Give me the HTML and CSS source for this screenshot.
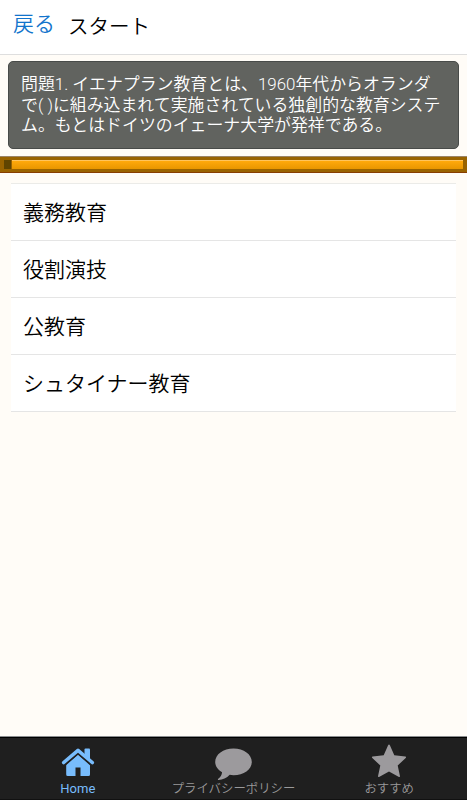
FILE: index.html
```
<!DOCTYPE html>
<html lang="ja">
<head>
    <meta charset="UTF-8">
    <meta name="viewport" content="width=device-width, initial-scale=1.0">
    <title>スタート</title>
    <link rel="stylesheet" href="styles.css">
</head>
<body>
    <header class="header">
        <a class="back" href="#">戻る</a>
        <h1 class="title">スタート</h1>
    </header>
    <main class="content">
        <p class="question">問題1. イエナプラン教育とは、1960年代からオランダ<br>で( )に組み込まれて実施されている独創的な教育システ<br>ム。もとはドイツのイェーナ大学が発祥である。</p>
        <div class="timer">
            <div class="timer-used"></div>
            <div class="timer-left"></div>
        </div>
        <ul class="answers">
            <li>義務教育</li>
            <li>役割演技</li>
            <li>公教育</li>
            <li>シュタイナー教育</li>
        </ul>
    </main>
    <nav class="tabs">
        <a class="tab active" href="#">
            <svg width="40" height="36" viewBox="0 0 40 36">
                <path d="M8.200 20.500 20 10.500l12 10V30.500q0 1.500-1.500 1.500h-8V23.500h-5v8.500H9.700q-1.500 0-1.500-1.500z"/>
                <path d="M5.700 19.600 20 7.300l14.300 12.300" fill="none" stroke="#1f1f1f" stroke-width="5.400"/>
                <path d="M26.500 5.500q0-1 1-1h3.500q1 0 1 1v10.500l-5.500-4.500z"/>
                <path d="M5.700 18.500 20 6.400l14.300 12.100" fill="none" stroke="#78bcfc" stroke-width="3.600" stroke-linecap="round" stroke-linejoin="round"/>
            </svg>
            <span>Home</span>
        </a>
        <a class="tab" href="#">
            <svg width="40" height="36" viewBox="0 0 40 36">
                <path d="M19.500 4.500c10.300 0 18.300 5.900 18.300 13.400S29.800 31.200 19.500 31.200q-2 0-3.800-.4c-3 3.200-7 5-11.200 5.200-.7 0-.8-.9-.2-1.300 2.100-1.500 3.500-3.700 3.800-6.400C3.800 25.900 1.200 22.200 1.200 17.900 1.200 10.400 9.200 4.500 19.500 4.500z"/>
            </svg>
            <span>プライバシーポリシー</span>
        </a>
        <a class="tab" href="#">
            <svg width="40" height="36" viewBox="0 0 40 36">
                <path d="M19 1.500q1-2 2 0l4.300 9.800 11 1.100q1.400.3.400 1.500l-8 7.600 2.200 10.300q.2 1.800-1.400 1L20 27.500l-9.500 5.300q-1.600.8-1.400-1l2.200-10.300-8-7.600q-1-1.200.4-1.500l11-1.100z"/>
            </svg>
            <span>おすすめ</span>
        </a>
    </nav>
</body>
</html>
```
FILE: styles.css
```
* { box-sizing: border-box; }
body { display: flex; flex-direction: column; height: 100vh; margin: 0; background-color: #fffcf7; font-family: Roboto, "Noto Sans CJK JP", sans-serif; font-weight: 350; color: #000; }
a { text-decoration: none; }
.header { display: flex; gap: 13px; height: 55px; padding: 0 13px; background: white; border-bottom: 1px solid #dedede; font-size: 21px; line-height: 30px; }
.back { padding-top: 9px; color: #1274cc; }
.title { margin: 0; padding-top: 12px; font-size: 20.5px; font-weight: 350; }
.content { flex: 1; padding-top: 6px; }
.question { height: 88px; margin: 0 8px; padding: 12px 12px 0; background: #61635f; border: 1px solid #484b49; border-radius: 5px; color: white; font-size: 16.9px; line-height: 20.7px; white-space: nowrap; }
.timer { display: flex; height: 17px; margin-top: 7px; padding: 3px 4px; background: #996300; border-top: 1px solid #9b8467; border-bottom: 1px solid #873d00; }
.timer-used { width: 8px; height: 9px; background: #604400; border-right: 1px solid #996300; }
.timer-left { flex: 1; height: 9px; background: linear-gradient(#ffa90b, #e89600); border-top: 1px solid #ffc45c; }
.answers { margin: 10px 11px 0; padding: 0; list-style: none; background: white; border-top: 1px solid #ebebe8; font-size: 21px; }
.answers li { height: 57px; padding-left: 12px; border-bottom: 1px solid #e5e5e5; line-height: 59px; }
.tabs { display: flex; height: 64px; background: #1f1f1f; border-top: 1px solid #8b8d8f; box-shadow: inset 0 1px #000, inset 0 -1px #111; }
.tab { flex: 1 1 0; display: flex; flex-direction: column; align-items: center; padding-top: 7px; color: #9a999a; font-size: 12.4px; font-weight: 350; line-height: 18px; white-space: nowrap; }
.tab svg { fill: #9c9a9d; }
.active { color: #78bcfc; font-size: 13px; font-weight: 400; }
.active svg { fill: #78bcfc; }
```
